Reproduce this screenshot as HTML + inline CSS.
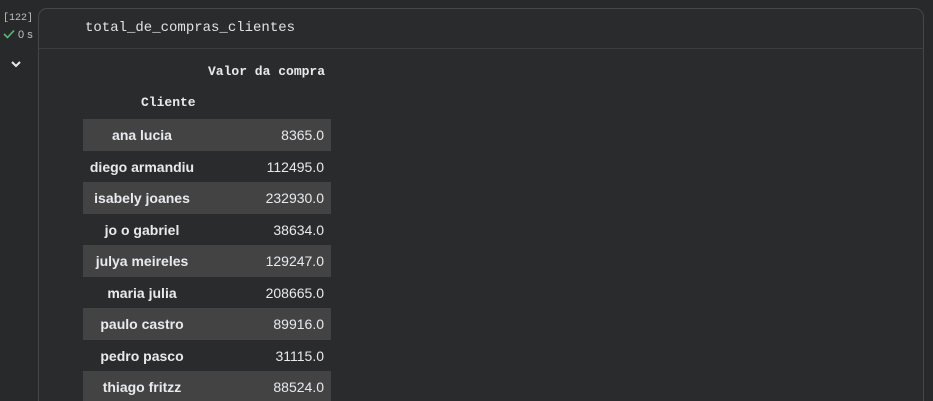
<!DOCTYPE html>
<html style="overflow:hidden;height:401px"><head><style>
body{margin:0;width:933px;height:401px;background:#28292b;overflow:hidden;position:relative;font-family:"Liberation Sans",sans-serif;color:#e8eaed}
.num{position:absolute;left:3px;top:13px;font:10px "Liberation Mono",monospace;color:#bdc1c6}
.ok{position:absolute;left:3px;top:29px;font:11px "Liberation Sans",sans-serif;color:#bdc1c6}
.cell{position:absolute;left:38px;top:8px;width:884px;height:400px;border:1px solid #45474a;border-radius:9px;background:#2a2b2d}
.code{position:absolute;left:85px;top:20px;font:14px "Liberation Mono",monospace;color:#e3e3e3}
.div{position:absolute;left:39px;top:48px;width:884px;height:1px;background:#3c3d40}
.hdr{position:absolute;font:bold 13px "Liberation Mono",monospace;color:#e8eaed}
.row{position:absolute;left:83px;width:248px;height:32px;font-weight:bold;font-size:14px}
.row.l{background:#434343}
.row span{position:absolute;top:8px}
.row .n{left:0;width:118px;text-align:center;white-space:nowrap}
.row .v{right:7px;font-weight:normal}
</style></head><body>
<div class="num">[122]</div>
<div class="ok"><svg width="12" height="10" viewBox="0 0 12 10" style="vertical-align:-1px"><path d="M1 5l3.5 3.5L11 1.5" stroke="#5bb974" stroke-width="1.6" fill="none"/></svg> 0 s</div>
<svg style="position:absolute;left:10px;top:60px" width="12" height="8" viewBox="0 0 12 8"><path d="M2 2l4 4 4-4" stroke="#e8eaed" stroke-width="2" fill="none"/></svg>
<div class="cell"></div>
<div class="div"></div>
<div class="code">total_de_compras_clientes</div>
<div class="hdr" style="left:208px;top:64px">Valor da compra</div>
<div class="hdr" style="left:141px;top:95px">Cliente</div>
<div class="row l" style="top:119px"><span class="n">ana lucia</span><span class="v">8365.0</span></div>
<div class="row" style="top:151px"><span class="n">diego armandiu</span><span class="v">112495.0</span></div>
<div class="row l" style="top:182px"><span class="n">isabely joanes</span><span class="v">232930.0</span></div>
<div class="row" style="top:214px"><span class="n">jo o gabriel</span><span class="v">38634.0</span></div>
<div class="row l" style="top:245px"><span class="n">julya meireles</span><span class="v">129247.0</span></div>
<div class="row" style="top:277px"><span class="n">maria julia</span><span class="v">208665.0</span></div>
<div class="row l" style="top:308px"><span class="n">paulo castro</span><span class="v">89916.0</span></div>
<div class="row" style="top:340px"><span class="n">pedro pasco</span><span class="v">31115.0</span></div>
<div class="row l" style="top:371px"><span class="n">thiago fritzz</span><span class="v">88524.0</span></div>
</body></html>
